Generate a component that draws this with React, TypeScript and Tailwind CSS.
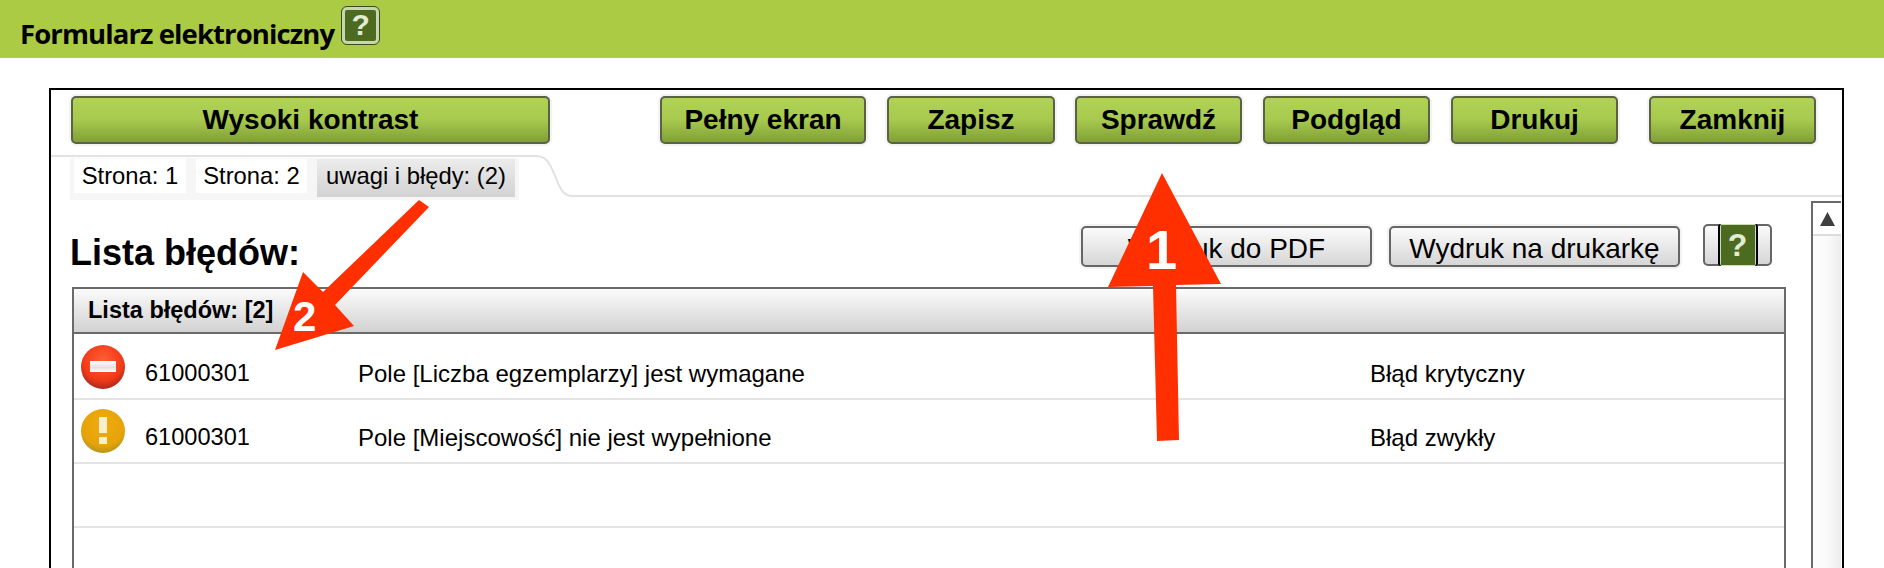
import React from 'react';

const greenButtons = [
  { label: 'Pełny ekran', className: 'ml-[110px] w-[206px]' },
  { label: 'Zapisz', className: 'ml-[21px] w-[168px]' },
  { label: 'Sprawdź', className: 'ml-[20px] w-[167px]' },
  { label: 'Podgląd', className: 'ml-[21px] w-[167px]' },
  { label: 'Drukuj', className: 'ml-[21px] w-[167px]' },
  { label: 'Zamknij', className: 'ml-[31px] w-[167px]' },
];

const errors = [
  { kind: 'critical', code: '61000301', text: 'Pole [Liczba egzemplarzy] jest wymagane', level: 'Błąd krytyczny' },
  { kind: 'warning', code: '61000301', text: 'Pole [Miejscowość] nie jest wypełnione', level: 'Błąd zwykły' },
];

const GreenButton: React.FC<{ label: string; className: string }> = ({ label, className }) => (
  <button className={`h-[48px] rounded-[5px] border-2 border-[#5a6147] bg-gradient-to-b from-[#b0d257] via-[#a7c94d] via-50% to-[#80a037] pb-[1px] text-[28px] font-bold text-black shadow-[0_0_0_2px_#f3f3f3] ${className}`}>
    {label}
  </button>
);

const GrayButton: React.FC<{ label: string; className: string }> = ({ label, className }) => (
  <button className={`h-[41px] rounded-[5px] border-2 border-[#666666] bg-gradient-to-b from-[#fbfbfb] to-[#d6d6d6] text-[28px] text-black shadow-[0_0_0_2px_#f3f3f3] ${className}`}>
    {label}
  </button>
);

const StatusIcon: React.FC<{ kind: string }> = ({ kind }) => (
  <svg width="44" height="44" viewBox="0 0 44 44" className="ml-[7px] mt-[-1px] shrink-0">
    <defs>
      <radialGradient id="redFill" cx="50%" cy="35%" r="70%">
        <stop offset="0%" stopColor="#ff5f35" />
        <stop offset="65%" stopColor="#f23a18" />
        <stop offset="100%" stopColor="#9a2420" />
      </radialGradient>
      <radialGradient id="yellowFill" cx="50%" cy="35%" r="70%">
        <stop offset="0%" stopColor="#f0ac0c" />
        <stop offset="70%" stopColor="#e6a30a" />
        <stop offset="100%" stopColor="#a89020" />
      </radialGradient>
      <linearGradient id="barFill" x1="0" y1="0" x2="0" y2="1">
        <stop offset="0%" stopColor="#ffffff" />
        <stop offset="60%" stopColor="#e4e0de" />
        <stop offset="100%" stopColor="#ffffff" />
      </linearGradient>
    </defs>
    {kind === 'critical' ? (
      <>
        <circle cx="22" cy="22" r="22" fill="url(#redFill)" />
        <rect x="9" y="16" width="26" height="11" fill="url(#barFill)" />
      </>
    ) : (
      <>
        <circle cx="22" cy="22" r="22" fill="url(#yellowFill)" />
        <rect x="18" y="8" width="8" height="16" fill="#f9efcc" />
        <rect x="18" y="28" width="8" height="7" fill="#f9efcc" />
      </>
    )}
  </svg>
);

export default function App() {
  return (
    <div className="relative h-[568px] overflow-hidden bg-white font-['Liberation_Sans',Arial,sans-serif] text-black">
      <div className="flex h-[58px] items-center bg-[#abcb45] pl-[20px]">
        <span className="mt-[10px] font-['Open_Sans',sans-serif] text-[27.5px] font-bold tracking-[-0.9px]">Formularz elektroniczny</span>
        <span className="ml-[8px] mt-[-8px] flex h-[37px] w-[37px] items-center justify-center rounded-[5px] border-[3px] border-[#c8d6ab] bg-[#4c6a20] text-[30px] font-bold leading-none text-[#e4ebd4] outline outline-[1px] outline-[#3c4a24]">?</span>
      </div>

      <div className="ml-[49px] mt-[30px] flex h-[480px] w-[1795px] flex-col border-2 border-b-0 border-black">
        <div className="flex h-[65px] items-start pl-[20px] pt-[6px]">
          <button className="h-[48px] w-[479px] rounded-[5px] border-2 border-[#5a6147] bg-gradient-to-b from-[#b0d257] via-[#a7c94d] via-50% to-[#80a037] pb-[1px] text-[28px] font-bold text-black shadow-[0_0_0_2px_#f3f3f3]">
            Wysoki kontrast
          </button>
          {greenButtons.map((b) => (
            <GreenButton key={b.label} label={b.label} className={b.className} />
          ))}
        </div>

        <div className="relative h-[42px]">
          <svg className="absolute inset-0" width="1791" height="42" viewBox="0 0 1791 42">
            <path d="M0 1 H484 C496 1 498 8 502 16 C508 30 510 41 522 41 H1791" fill="none" stroke="#e2e2e2" strokeWidth="2" />
          </svg>
          <div className="absolute left-[19px] top-[3px] flex h-[42px] items-start gap-[10px] bg-[#f6f6f6] px-[4px] pt-[1px] text-[23.8px]">
            <div className="flex h-[34px] w-[112px] items-center justify-center bg-white">Strona: 1</div>
            <div className="flex h-[34px] w-[111px] items-center justify-center bg-white">Strona: 2</div>
            <div className="flex h-[38px] w-[198px] items-center justify-center bg-gradient-to-b from-[#ececec] to-[#d2d2d2] pb-[4px]">uwagi i błędy: (2)</div>
          </div>
        </div>

        <div className="flex min-h-0 flex-1">
          <div className="ml-[21px] w-[1714px]">
            <div className="flex h-[90px] items-start">
              <h1 className="ml-[-2px] mt-[31px] text-[36px] font-bold leading-[50px]">Lista błędów:</h1>
              <GrayButton label="Wydruk do PDF" className="ml-[781px] mt-[29px] w-[291px]" />
              <GrayButton label="Wydruk na drukarkę" className="ml-[17px] mt-[29px] w-[291px]" />
              <div className="ml-[23px] mt-[27px] flex h-[42px] w-[69px] justify-center rounded-[5px] border-2 border-[#666666] bg-gradient-to-b from-[#fbfbfb] to-[#d6d6d6]">
                <span className="mt-[-2px] flex h-[42px] w-[40px] items-center justify-center rounded-[3px] border-x-2 border-black bg-[#4c6a20] text-[32px] font-bold leading-none text-[#e4ebd4] ring-1 ring-inset ring-[#cfdcb8]">?</span>
              </div>
            </div>
            <div className="h-[400px] border-2 border-b-0 border-[#6a6a6a]">
              <div className="flex h-[45px] items-center border-b-2 border-[#6a6a6a] bg-gradient-to-b from-[#fbfbfb] to-[#d2d2d2] pl-[14px] text-[23.5px] font-bold">
                Lista błędów: [2]
              </div>
              <div className="pt-[2px]">
                {errors.map((e) => (
                  <div key={e.text} className="flex h-[64px] items-center border-b-2 border-[#e4e4e4] text-[24px]">
                    <StatusIcon kind={e.kind} />
                    <span className="ml-[20px] mt-[14px] w-[213px] text-[23.6px]">{e.code}</span>
                    <span className="mt-[14px] w-[1012px]">{e.text}</span>
                    <span className="mt-[14px]">{e.level}</span>
                  </div>
                ))}
                <div className="h-[64px] border-b-2 border-[#e4e4e4]" />
              </div>
            </div>
          </div>
          <div className="ml-[25px] mt-[4px] w-[30px] border-l-2 border-t-2 border-[#6a6a6a] bg-gradient-to-r from-[#fdfdfd] via-[#fafafa] to-[#eeeeee]">
            <div className="flex h-[33px] items-center justify-center border-b-2 border-[#dcdcdc] bg-white">
              <svg width="15" height="14" viewBox="0 0 15 14"><path d="M7.5 0 L15 14 H0 Z" fill="#3f3f3f" /></svg>
            </div>
          </div>
        </div>
      </div>

      {/* czerwone strzałki na zrzucie */}
      <svg className="pointer-events-none absolute left-0 top-0" width="1884" height="568" viewBox="0 0 1884 568">
        <path d="M1162 173 L1221 284 L1176 285 L1179 440 L1157 441 L1153 286 L1108 287 Z" fill="#ff2f00" />
        <path d="M419 200 L429 207 L335 305 L354 326 L275 350 L303 272 L323 292 Z" fill="#ff2f00" />
      </svg>
      <span className="absolute left-[1146px] top-[218px] text-[56px] font-bold leading-[64px] text-white">1</span>
      <span className="absolute left-[293px] top-[293px] text-[42px] font-bold leading-[48px] text-white">2</span>
    </div>
  );
}
